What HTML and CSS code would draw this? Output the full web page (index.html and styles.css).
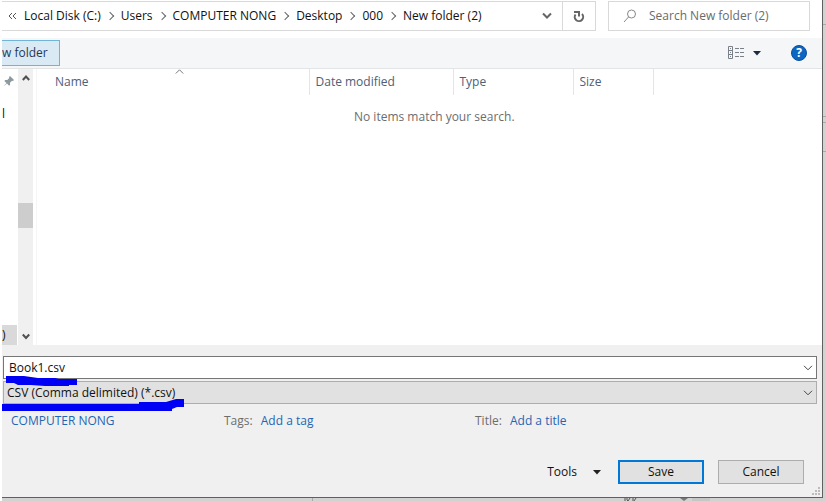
FILE: index.html
```html
<!DOCTYPE html>
<html lang="en">
<head>
<meta charset="utf-8">
<title>Save As</title>
<link rel="stylesheet" href="styles.css">
</head>
<body>
<main class="dialog">
  <header class="address-row">
    <nav class="address" aria-label="Folder path">
      <svg class="back" width="9" height="8" viewBox="0 0 9 8"><path d="M4 1 1 4l3 3M8 1 5 4l3 3"/></svg>
      <ol class="crumbs">
        <li><a href="#">Local Disk (C:)</a></li>
        <li><a href="#">Users</a></li>
        <li><a href="#">COMPUTER NONG</a></li>
        <li><a href="#">Desktop</a></li>
        <li><a href="#">000</a></li>
        <li><a href="#">New folder (2)</a></li>
      </ol>
      <button class="icon-btn recent" aria-label="Previous locations"><svg width="10" height="8" viewBox="0 0 10 8"><path d="m1 1.500 4 4 4-4"/></svg></button>
      <button class="icon-btn refresh" aria-label="Refresh"><svg width="12" height="13" viewBox="0 0 12 13"><path d="M2.500 4.500A4.200 4.200 0 1 0 9 4"/><path d="M1 2h5v4.500"/></svg></button>
    </nav>
    <label class="search">
      <svg width="14" height="14" viewBox="0 0 14 14"><circle cx="8.500" cy="5" r="4"/><path d="M5.600 7.900 1 13"/></svg>
      <input type="search" placeholder="Search New folder (2)" aria-label="Search New folder (2)">
    </label>
  </header>

  <div class="toolbar">
    <button class="new-folder">w folder</button>
    <div class="tools">
      <button class="icon-btn view" aria-label="Change view">
        <svg width="17" height="14" viewBox="0 0 17 14"><path d="M.5.5h4v12h-4zM.5 4.500h4M.5 8.500h4"/><path d="M2 2.500h1M2 6.500h1M2 10.500h1M7 2.500h4M12 2.500h4M7 6.500h4M12 6.500h4M7 10.500h4M12 10.500h4"/></svg>
      </button>
      <button class="icon-btn view-menu" aria-label="View options"><svg width="8" height="5" viewBox="0 0 8 5"><path d="M0 0h8L4 4.500z"/></svg></button>
      <button class="help" aria-label="Help">?</button>
    </div>
  </div>

  <div class="browser">
    <aside class="places">
      <svg class="pin" width="12" height="12" viewBox="0 0 12 12"><path d="m7 1 4 4-1 1-1-.3-2 2 .1 2-1 1L4 8.500.5 11.500l3-3.500L1.300 6l1-1 2 .1 2-2L6 2z"/></svg>
      <span class="place">l</span>
      <span class="place current">)</span>
    </aside>
    <div class="scrollbar">
      <svg width="8" height="7" viewBox="0 0 8 7"><path d="m.8 5 3.200-3.500L7.200 5"/></svg>
      <span class="thumb"></span>
      <svg width="8" height="7" viewBox="0 0 8 7"><path d="M.8 1.500 4 5l3.200-3.500"/></svg>
    </div>
    <section class="files">
      <table>
        <thead><tr>
          <th class="name">Name<svg class="sort" width="9" height="5" viewBox="0 0 9 5"><path d="m.8 4.500 3.700-3.700 3.700 3.700"/></svg></th>
          <th class="date">Date modified</th><th class="type">Type</th><th class="size">Size</th><th class="rest"></th>
        </tr></thead>
      </table>
      <p class="empty">No items match your search.</p>
    </section>
  </div>

  <form class="details">
    <div class="field">
      <input type="text" value="Book1.csv" aria-label="File name">
      <svg class="drop" width="10" height="6" viewBox="0 0 10 6"><path d="m1 .8 4 4 4-4"/></svg>
      <svg class="mark mark-name" width="74" height="12" viewBox="0 0 74 12"><path d="M1 1h18l14 2h17l4 1h18v6h-8v1H40L26 10H13L9 8H1z"/></svg>
    </div>
    <div class="field">
      <select aria-label="Save as type"><option>CSV (Comma delimited) (*.csv)</option></select>
      <svg class="drop" width="10" height="6" viewBox="0 0 10 6"><path d="m1 .8 4 4 4-4"/></svg>
      <svg class="mark mark-type" width="184" height="13" viewBox="0 0 184 13"><path d="M1 5h138V3h27l10-3h8v8h-7l-5 2v2H1z"/></svg>
    </div>
    <div class="meta">
      <a class="author" href="#">COMPUTER NONG</a>
      <span class="tags">Tags: <a href="#">Add a tag</a></span>
      <span class="doc-title">Title: <a href="#">Add a title</a></span>
    </div>
    <div class="actions">
      <button type="button" class="tools-menu">Tools <svg width="8" height="5" viewBox="0 0 8 5"><path d="M0 0h8L4 4.500z"/></svg></button>
      <button type="button" class="btn primary">Save</button>
      <button type="button" class="btn">Cancel</button>
    </div>
    <svg class="grip" width="9" height="9" viewBox="0 0 9 9"><path d="M7 0h2v2H7zM7 3h2v2H7zM7 6h2v2H7zM4 3h2v2H4zM4 6h2v2H4zM1 6h2v2H1z"/></svg>
  </form>
</main>
<svg class="behind-right" width="3" height="160" viewBox="0 0 3 160"><path d="M0 24.500h3M0 116.500h3M0 122.500h3M0 151.500h3"/></svg>
<svg class="behind-bottom" width="400" height="3" viewBox="0 0 400 3"><path d="M.5 0v3"/><path class="ink" d="M313 0v3M315 0v2l1 1 2-3M321 0v3M324 0l-2 3"/><path class="tip" d="M368 0h8l-4 3z"/><path class="pale" d="M380 0h18v3h-18z"/></svg>
</body>
</html>
```

FILE: styles.css
```css
* { box-sizing: border-box; }

body {
  margin: 0;
  min-height: 100vh;
  display: flex;
  position: relative;
  padding: 0 3px 3px 0;
  border-left: 2px solid #fff;
  background: #d2d2d2;
  color: #111;
  font: 12px/16px "Open Sans", "Noto Sans", sans-serif;
}

button, input, select { font: inherit; color: inherit; border-radius: 0; }
button { cursor: pointer; }
a { color: inherit; text-decoration: none; }
svg { display: block; flex: none; fill: none; }

.dialog {
  flex: 1;
  display: flex;
  flex-direction: column;
  background: #fff;
  border-right: 1px solid #606060;
  border-bottom: 1px solid #606060;
}

.address-row { display: flex; gap: 12px; padding: 1px 12px 7px 0; }

.address {
  flex: 1;
  display: flex;
  align-items: center;
  height: 30px;
  padding-left: 6px;
  border: 1px solid #d9d9d9;
  border-left: 0;
}
.back { stroke: #555; }
.crumbs { flex: 1; display: flex; margin: 0; padding: 0 0 0 7px; list-style: none; white-space: nowrap; }
.crumbs li { display: flex; align-items: center; }
.crumbs li + li::before {
  content: "";
  width: 5px;
  height: 5px;
  margin: 0 8px 0 6px;
  border: solid #666;
  border-width: 1px 1px 0 0;
  transform: rotate(45deg);
}

.icon-btn { display: flex; align-items: center; justify-content: center; padding: 0; border: 0; background: none; }
.recent { width: 30px; height: 28px; }
.recent svg { stroke: #666; stroke-width: 2; }
.refresh { width: 33px; height: 28px; border-left: 1px solid #d9d9d9; }
.refresh svg { stroke: #666; stroke-width: 2; }

.search {
  width: 202px;
  height: 30px;
  display: flex;
  align-items: center;
  gap: 12px;
  padding: 0 14px;
  border: 1px solid #d9d9d9;
}
.search svg { stroke: #888; }
.search input { flex: 1; min-width: 0; padding: 0; border: 0; outline: 0; background: none; }
.search input::placeholder { color: #6b6b6b; opacity: 1; }

.toolbar {
  display: flex;
  justify-content: space-between;
  height: 31px;
  padding-right: 15px;
  background: #f5f6f7;
  border-bottom: 1px solid #e2e4e6;
}
.new-folder {
  align-self: center;
  height: 26px;
  padding: 0 11px 0 0;
  border: 1px solid #70b4d8;
  border-left: 0;
  background: #d9eaf5;
  color: #1e395b;
}
.tools { display: flex; align-items: center; }
.view { width: 17px; }
.view svg { stroke: #7b8088; }
.view-menu { width: 24px; }
.view-menu svg { fill: #1e2a44; }
.help {
  width: 16px;
  height: 16px;
  margin-left: 22px;
  padding: 0;
  border: 1px solid #0a4f9c;
  border-radius: 50%;
  background: #0a66c2;
  color: #fff;
  font-weight: 700;
  line-height: 14px;
}

.browser { flex: 1; display: flex; }
.places { width: 16px; display: flex; flex-direction: column; padding-top: 6px; }
.pin { margin-left: 1px; fill: #8c9aa0; }
.place { margin-top: 18px; line-height: 18px; }
.place.current { margin-top: auto; width: 15px; line-height: 20px; background: #d9d9d9; }
.scrollbar {
  width: 15px;
  display: flex;
  flex-direction: column;
  align-items: center;
  padding: 6px 0 5px;
  background: #f0f0f0;
}
.scrollbar svg { stroke: #505050; stroke-width: 2; }
.thumb { width: 15px; height: 25px; margin: 121px 0 auto; background: #cdcdcd; }

.files { flex: 1; margin-left: 3px; border-left: 1px solid #f5f5f5; }
table { width: 100%; table-layout: fixed; border-collapse: collapse; }
th { position: relative; height: 26px; padding: 0 6px; border-right: 1px solid #e5e5e5; color: #4c607a; font-weight: 400; text-align: left; }
.name { width: 272px; padding-left: 18px; }
.date { width: 144px; }
.type { width: 120px; }
.size { width: 80px; }
.rest { border: 0; }
.sort { position: absolute; top: 0; left: 51%; stroke: #777; }
.empty { width: 100%; margin: 14px 0 0; padding-left: 317px; color: #6d6d6d; }

.details { position: relative; padding: 11px 5px 13px 1px; background: #f0f0f0; }
.field { position: relative; margin-bottom: 2px; }
.field input, .field select {
  display: block;
  width: 100%;
  height: 23px;
  padding: 0 24px 0 5px;
  border: 1px solid #767676;
  outline: 0;
  background: #fff;
}
.field select { appearance: none; padding-left: 3px; border-color: #adadad; background: #e1e1e1; }
.drop { position: absolute; right: 4px; top: 9px; stroke: #444; pointer-events: none; }
.mark { position: absolute; z-index: 1; fill: #0000f5; pointer-events: none; }
.mark-name { left: 2px; top: 19px; }
.mark-type { left: -3px; top: 18px; }

.meta { display: grid; grid-template-columns: 213px 251px 1fr; padding: 7px 0 0 8px; color: #6d6d6d; }
.meta a { color: #1f66b3; }
.tags a, .doc-title a { margin-left: 5px; }

.actions { display: flex; align-items: center; justify-content: flex-end; gap: 14px; padding: 31px 13px 0 0; }
.tools-menu { display: flex; align-items: center; gap: 16px; padding: 0; margin-right: 3px; border: 0; background: none; }
.tools-menu svg { fill: #222; }
.btn { width: 86px; height: 24px; padding: 0; border: 1px solid #adadad; background: #e1e1e1; }
.primary { border: 2px solid #0078d7; }
.grip { position: absolute; right: 2px; bottom: 1px; fill: #bcbcbc; }

.behind-right { position: absolute; right: 0; top: 0; stroke: #aaa; }
.behind-bottom { position: absolute; left: 310px; bottom: 0; stroke: #aaa; }
.behind-bottom .ink { stroke: #555; }
.behind-bottom .tip { fill: #777; stroke: none; }
.behind-bottom .pale { fill: #c6c6c6; stroke: none; }
```
